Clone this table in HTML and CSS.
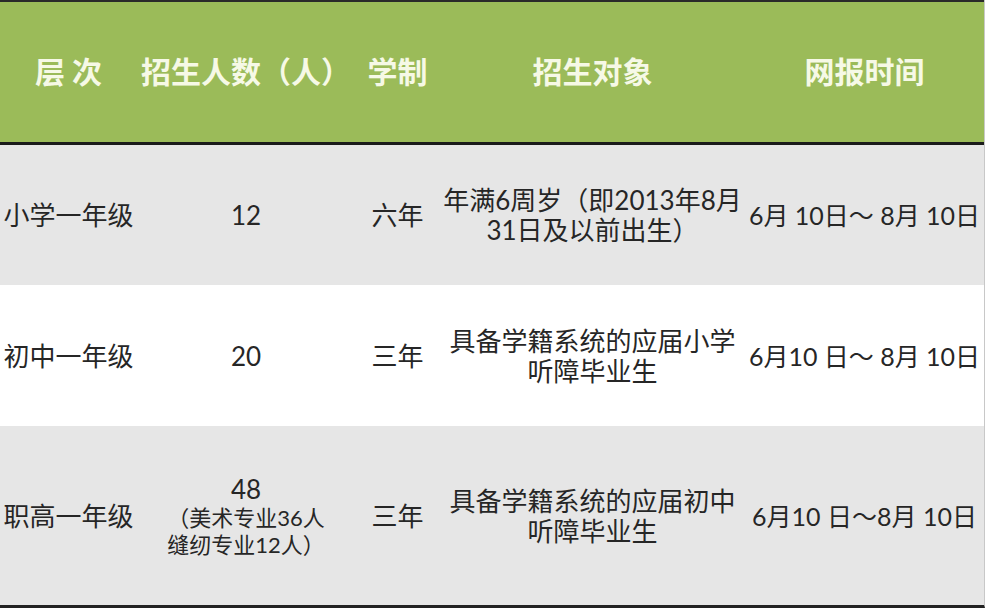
FILE: index.html
```html
<!DOCTYPE html>
<html lang="zh-CN">
<head>
<meta charset="utf-8">
<title>招生计划</title>
<link rel="stylesheet" href="styles.css">
</head>
<body>
<div class="table">
  <div class="row head">
    <div class="cell">层 次</div>
    <div class="cell">招生人数（人）</div>
    <div class="cell">学制</div>
    <div class="cell">招生对象</div>
    <div class="cell">网报时间</div>
  </div>
  <div class="row shaded r1">
    <div class="cell">小学一年级</div>
    <div class="cell">12</div>
    <div class="cell">六年</div>
    <div class="cell multi">年满6周岁（即2013年8月<br>31日及以前出生）</div>
    <div class="cell date">6月 10日～ 8月 10日</div>
  </div>
  <div class="row plain r2">
    <div class="cell">初中一年级</div>
    <div class="cell">20</div>
    <div class="cell">三年</div>
    <div class="cell multi">具备学籍系统的应届小学<br>听障毕业生</div>
    <div class="cell date">6月10 日～ 8月 10日</div>
  </div>
  <div class="row shaded r3">
    <div class="cell">职高一年级</div>
    <div class="cell count">
      <div class="num">48</div>
      <div class="note">（美术专业36人<br>缝纫专业12人）</div>
    </div>
    <div class="cell">三年</div>
    <div class="cell multi">具备学籍系统的应届初中<br>听障毕业生</div>
    <div class="cell date">6月10 日～8月 10日</div>
  </div>
</div>
</body>
</html>
```

FILE: styles.css
```css
html, body {
  margin: 0;
  padding: 0;
  background: #ffffff;
}

.table {
  width: 985px;
  height: 608px;
  display: flex;
  flex-direction: column;
  font-family: "Lato", "Noto Sans CJK SC", sans-serif;
  color: #262626;
  border-bottom: 3px solid #222222;
  border-right: 1px solid #c8c8c8;
  box-sizing: border-box;
}

.row {
  display: grid;
  grid-template-columns: 137px 218px 85px 305px 239px;
}

.cell {
  display: flex;
  flex-direction: column;
  align-items: center;
  justify-content: center;
  text-align: center;
  white-space: nowrap;
}

.head {
  height: 145px;
  box-sizing: border-box;
  background: #9bbb59;
  border-top: 2px solid #2a2a2a;
  border-bottom: 3px solid #1a1a1a;
  color: #f6f9e6;
  font-family: "Noto Sans CJK SC", sans-serif;
  font-size: 30px;
  font-weight: 600;
}

.head .cell {
  padding-bottom: 4px;
}

.shaded {
  background: #e6e6e6;
}

.plain {
  background: #ffffff;
}

.r1 { height: 140px; }
.r2 { height: 141px; }
.r3 { height: 179px; }

.r1, .r2, .r3 {
  font-size: 26px;
  line-height: 30px;
}

.date {
  font-size: 25px;
}

.count .num {
  line-height: 30px;
}

.note {
  font-size: 22px;
  line-height: 27px;
}
```
